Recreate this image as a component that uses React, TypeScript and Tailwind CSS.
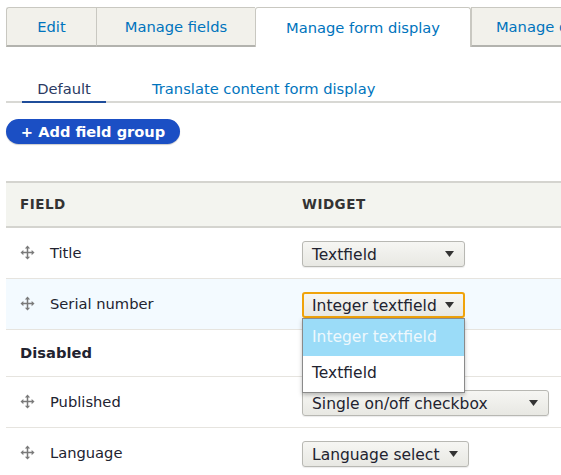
import type { ReactNode } from "react";

interface FieldRow {
  label: string;
  widget: string;
  widthClass: string;
  focused?: boolean;
}

const TABS = [
  { label: "Edit", widthClass: "w-[90px]", active: false },
  { label: "Manage fields", widthClass: "w-[159px]", active: false },
  { label: "Manage form display", widthClass: "w-[216px]", active: true },
  { label: "Manage display", widthClass: "w-[164px]", active: false },
];

const ENABLED_ROWS: FieldRow[] = [
  { label: "Title", widget: "Textfield", widthClass: "w-[163px]" },
  { label: "Serial number", widget: "Integer textfield", widthClass: "w-[163px]", focused: true },
];

const DISABLED_ROWS: FieldRow[] = [
  { label: "Published", widget: "Single on/off checkbox", widthClass: "w-[247px]" },
  { label: "Language", widget: "Language select", widthClass: "w-[167px]" },
];

function DragHandle(): JSX.Element {
  return (
    <svg className="h-[15px] w-[15px] shrink-0" viewBox="0 0 16 16" fill="#7a7a7a">
      <rect x="7.2" y="3" width="1.6" height="10" />
      <rect x="3" y="7.2" width="10" height="1.6" />
      <polygon points="8,0.5 10.8,3.6 5.2,3.6" />
      <polygon points="8,15.5 10.8,12.4 5.2,12.4" />
      <polygon points="0.5,8 3.6,5.2 3.6,10.8" />
      <polygon points="15.5,8 12.4,5.2 12.4,10.8" />
    </svg>
  );
}

function Caret(): JSX.Element {
  return (
    <svg className="h-[6px] w-[9px] shrink-0" viewBox="0 0 9 6" fill="#333333">
      <polygon points="0,0 9,0 4.5,6" />
    </svg>
  );
}

function Select({ value, widthClass, focused }: { value: string; widthClass: string; focused?: boolean }): JSX.Element {
  return (
    <div
      className={
        "flex h-[26px] items-center justify-between rounded-[3px] bg-gradient-to-b from-[#f6f6f3] to-[#e8e8e3] text-[15.5px] text-[#222330] " +
        widthClass +
        (focused
          ? " border-2 border-[#f0a30a] pl-[8px] pr-[9px]"
          : " border border-[#b8b8b3] pl-[9px] pr-[10px] shadow-[0_1px_1px_rgba(0,0,0,0.08)]")
      }
    >
      <span className="whitespace-nowrap pt-[3px] leading-none">{value}</span>
      <Caret />
    </div>
  );
}

function Row({ row, children }: { row: FieldRow; children?: ReactNode }): JSX.Element {
  return (
    <div
      className={
        "relative flex h-[51px] items-center border-b border-[#e6e4df] " +
        (row.focused ? "bg-[#f3faff]" : "bg-white")
      }
    >
      <div className="flex w-[282px] items-center gap-[15px] pl-[14px] text-[14.7px] text-[#222330]">
        <DragHandle />
        <span>{row.label}</span>
      </div>
      <div className="pl-[14px] pt-[2px]">
        <Select value={row.widget} widthClass={row.widthClass} focused={row.focused} />
      </div>
      {children}
    </div>
  );
}

export default function App(): JSX.Element {
  return (
    <div
      className="h-[475px] w-[561px] overflow-hidden bg-white"
      style={{ fontFamily: '"DejaVu Sans", "Liberation Sans", sans-serif' }}
    >
      <div className="flex pl-[6px] pt-[7px]">
        {TABS.map((tab) => (
          <div
            key={tab.label}
            className={
              "flex h-[40px] shrink-0 items-center justify-center whitespace-nowrap pt-[1px] text-[14.7px] text-[#0074bd] " +
              tab.widthClass +
              (tab.active
                ? " rounded-t-[3px] border border-b-0 border-[#c9c8c1] bg-white"
                : " border-t border-l border-[#c9c8c1] border-b-2 border-b-[#b3b3ae] bg-[#f2f1eb] first:rounded-tl-[3px]")
            }
          >
            {tab.label}
          </div>
        ))}
      </div>

      <div className="ml-[6px] mt-[15px] flex h-[41px] items-stretch border-b-2 border-[#d8d8d4] text-[14.7px]">
        <div className="relative ml-[16px] flex w-[84px] items-center justify-center pt-[15px] text-[#2b3a63]">
          Default
          <span className="absolute bottom-[-2px] left-0 h-[2px] w-[84px] bg-[#1f4d9a]" />
        </div>
        <div className="flex items-center pl-[46px] pt-[15px] text-[#0074bd]">Translate content form display</div>
      </div>

      <div className="ml-[6px] mt-[16px] flex">
        <button
          type="button"
          className="flex h-[25px] w-[174px] items-center justify-center rounded-full bg-[#1b4fc4] text-[14.6px] font-bold text-white shadow-[0_1px_1px_rgba(0,0,0,0.2)]"
        >
          + Add field group
        </button>
      </div>

      <div className="ml-[6px] mt-[37px]">
        <div className="flex h-[47px] items-center border-y-2 border-[#d4d4cf] bg-[#f3f4ef] text-[13.5px] font-bold tracking-[0.5px] text-[#333333]">
          <div className="w-[282px] pl-[14px]">FIELD</div>
          <div className="pl-[14px]">WIDGET</div>
        </div>

        {ENABLED_ROWS.map((row) => (
          <Row key={row.label} row={row}>
            {row.focused ? (
              <div className="absolute left-[296px] top-[39px] z-10 w-[163px] border border-[#8a8a8a] bg-white text-[15.5px] shadow-[0_2px_4px_rgba(0,0,0,0.25)]">
                <div className="flex h-[37px] items-center bg-[#9bdcf8] pl-[9px] text-[#eef8fd]">Integer textfield</div>
                <div className="flex h-[36px] items-center pl-[9px] text-[#222330]">Textfield</div>
              </div>
            ) : null}
          </Row>
        ))}

        <div className="flex h-[47px] items-center border-b border-[#e6e4df] pl-[14px] text-[14.7px] font-bold text-[#222330]">
          Disabled
        </div>

        {DISABLED_ROWS.map((row) => (
          <Row key={row.label} row={row} />
        ))}
      </div>
    </div>
  );
}
